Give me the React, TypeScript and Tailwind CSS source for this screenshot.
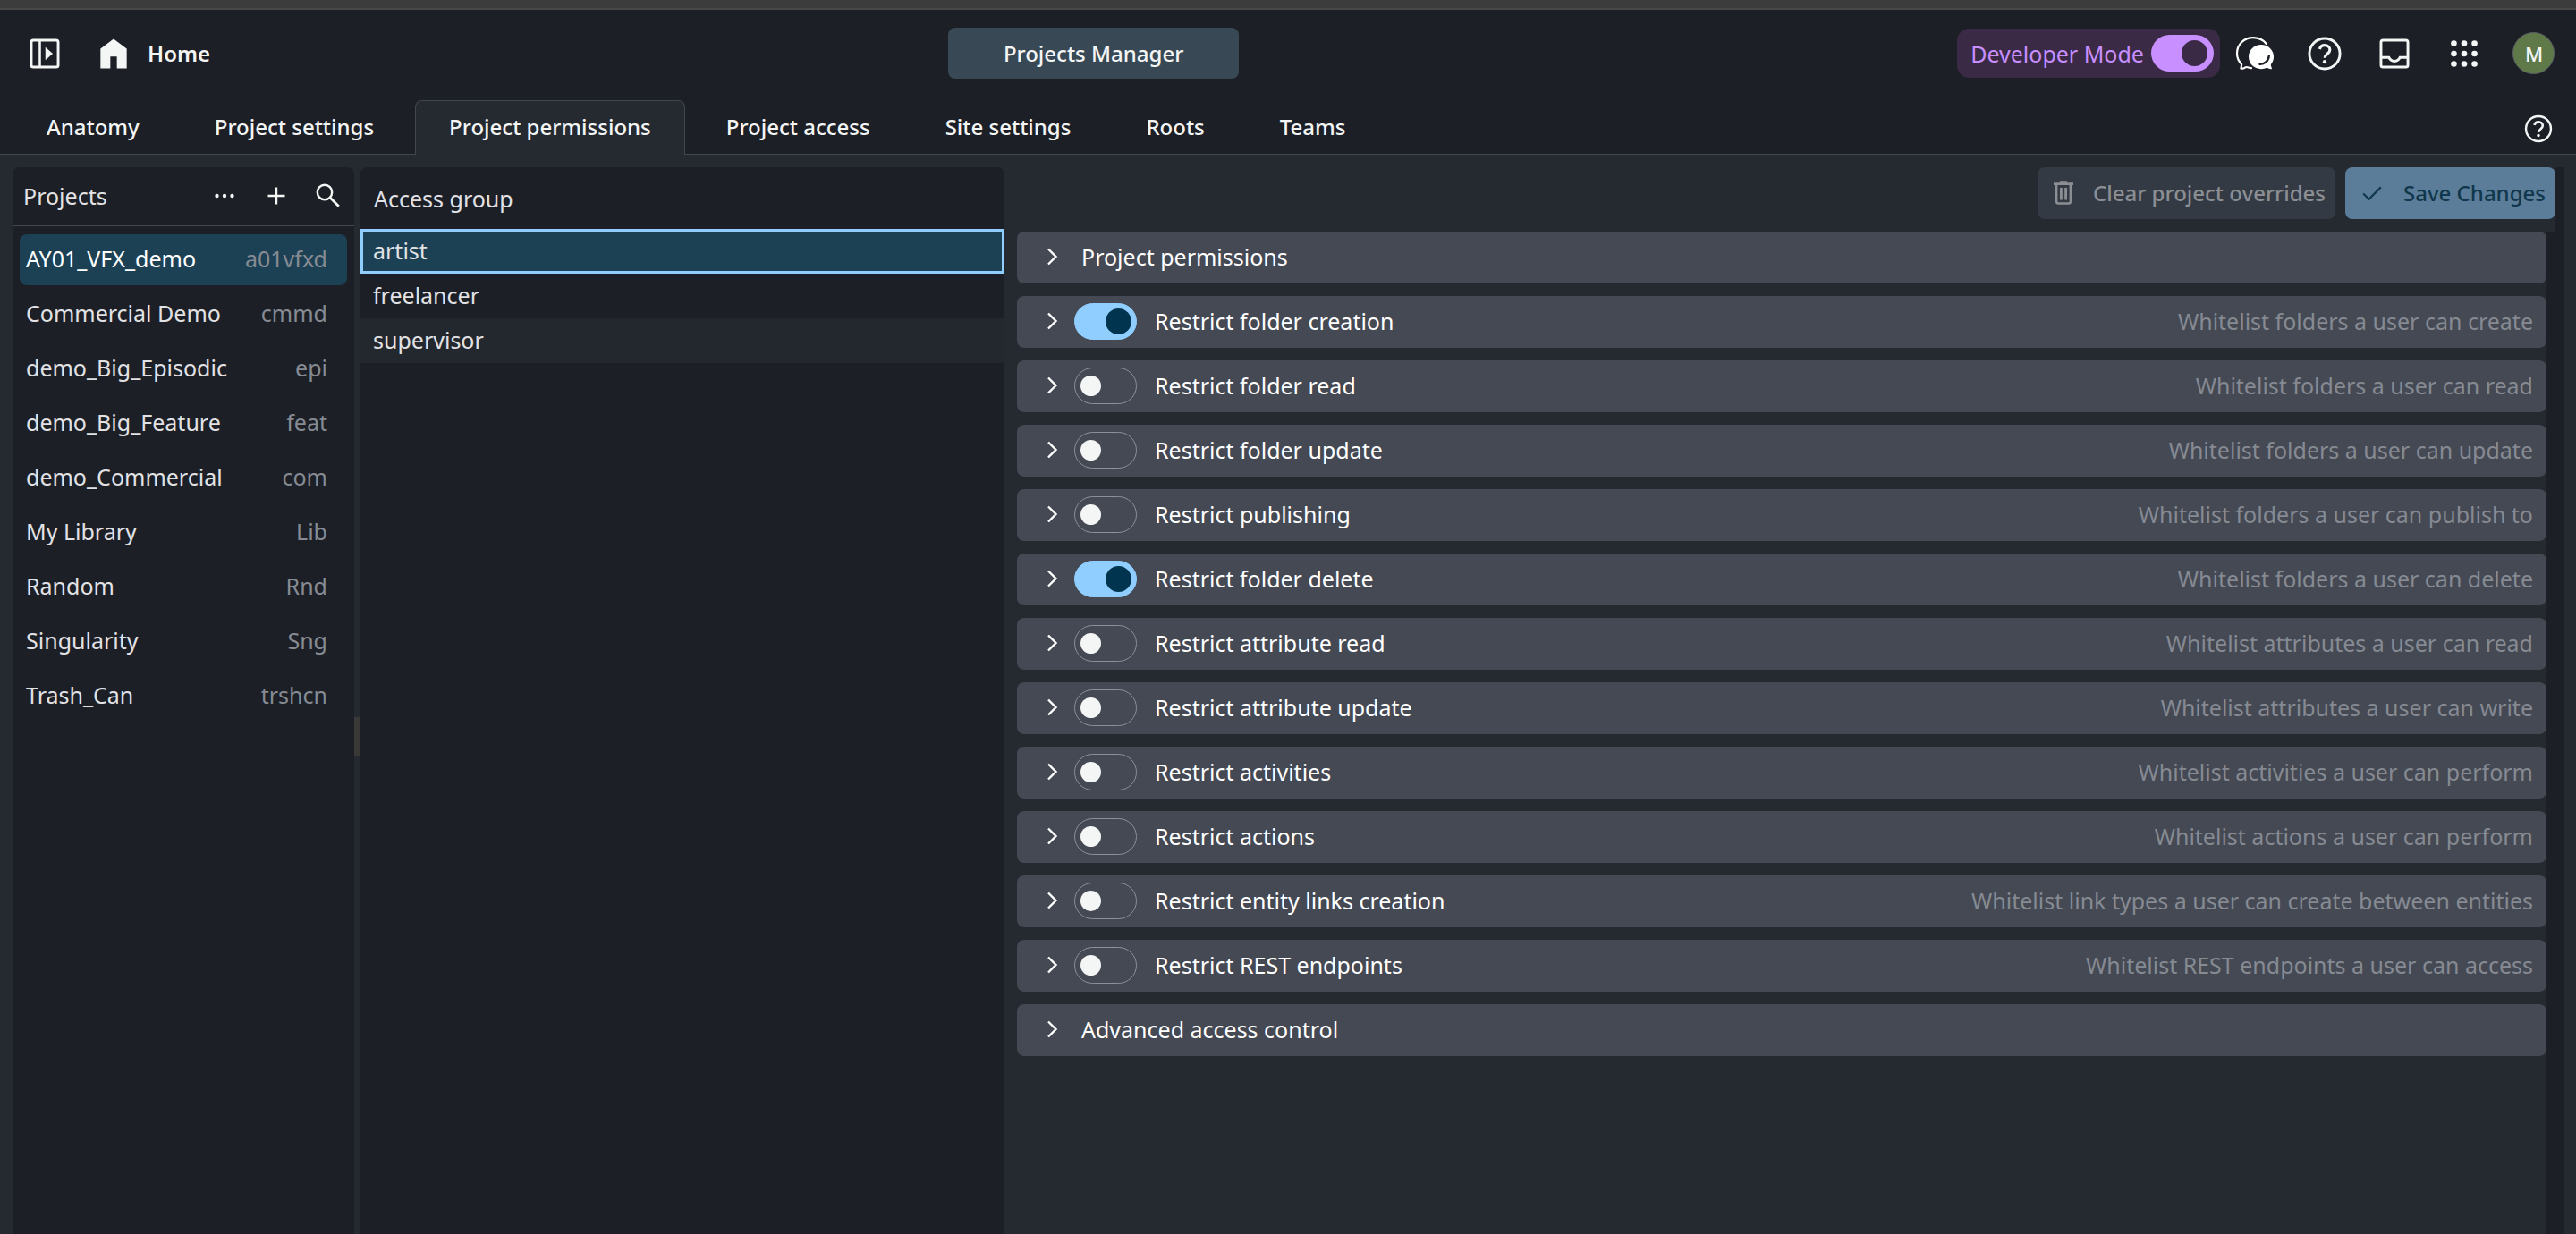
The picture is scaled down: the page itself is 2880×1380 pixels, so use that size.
import React from 'react';

interface Project {
  name: string;
  code: string;
}

interface Permission {
  label: string;
  hint: string;
  enabled: boolean;
}

const TABS = ['Anatomy', 'Project settings', 'Project permissions', 'Project access', 'Site settings', 'Roots', 'Teams'];

const PROJECTS: Project[] = [
  { name: 'AY01_VFX_demo', code: 'a01vfxd' },
  { name: 'Commercial Demo', code: 'cmmd' },
  { name: 'demo_Big_Episodic', code: 'epi' },
  { name: 'demo_Big_Feature', code: 'feat' },
  { name: 'demo_Commercial', code: 'com' },
  { name: 'My Library', code: 'Lib' },
  { name: 'Random', code: 'Rnd' },
  { name: 'Singularity', code: 'Sng' },
  { name: 'Trash_Can', code: 'trshcn' },
];

const GROUPS = ['artist', 'freelancer', 'supervisor'];

const PERMISSIONS: Permission[] = [
  { label: 'Restrict folder creation', hint: 'Whitelist folders a user can create', enabled: true },
  { label: 'Restrict folder read', hint: 'Whitelist folders a user can read', enabled: false },
  { label: 'Restrict folder update', hint: 'Whitelist folders a user can update', enabled: false },
  { label: 'Restrict publishing', hint: 'Whitelist folders a user can publish to', enabled: false },
  { label: 'Restrict folder delete', hint: 'Whitelist folders a user can delete', enabled: true },
  { label: 'Restrict attribute read', hint: 'Whitelist attributes a user can read', enabled: false },
  { label: 'Restrict attribute update', hint: 'Whitelist attributes a user can write', enabled: false },
  { label: 'Restrict activities', hint: 'Whitelist activities a user can perform', enabled: false },
  { label: 'Restrict actions', hint: 'Whitelist actions a user can perform', enabled: false },
  { label: 'Restrict entity links creation', hint: 'Whitelist link types a user can create between entities', enabled: false },
  { label: 'Restrict REST endpoints', hint: 'Whitelist REST endpoints a user can access', enabled: false },
];

const HelpIcon: React.FC<{ className: string }> = ({ className }) => (
  <svg className={className} viewBox="0 0 24 24" fill="none" stroke="currentColor">
    <circle cx="12" cy="12" r="9.3" strokeWidth="1.6" />
    <path d="M8.9 9.3C9.4 7.7 10.5 6.9 12 6.9c1.9 0 3.2 1.2 3.2 2.8 0 2.3-3.1 2.6-3.1 4.9" strokeWidth="1.7" />
    <circle cx="12" cy="17" r="1.15" fill="currentColor" stroke="none" />
  </svg>
);

const ChatIcon = () => (
  <svg className="h-[38px] w-[44px]" viewBox="0 0 44 38" fill="none">
    <path
      d="M35 8.2C31.6 4 26.2 1.2 20 1.2 9.7 1.2 2 9 2 18.8c0 4.7 1.9 8.800 5 11.800.4 1.900-.2 3.400-.6 5 1.800.4 3.400-.2 5-1.300 1.800-1.200 3.600.8 6.600.9"
      stroke="#fff"
      strokeWidth="2.2"
      strokeLinecap="round"
      strokeLinejoin="round"
    />
    <path
      d="M29 9c7.9 0 14 6 14 13.6 0 3.5-1.2 6.4-3.2 8.7.1 1.9.9 3 1.2 4.7-2.1.6-3.6-.2-5.4-1.2-2 .9-4.2 1.4-6.6 1.4-7.9 0-14-6-14-13.600S21.100 9 29 9z"
      fill="#fff"
    />
    <path d="M27.5 30.7c5 .3 9.7-3.3 10.3-9.2" stroke="#1c1f26" strokeWidth="2.4" strokeLinecap="round" />
  </svg>
);

const ChevronIcon = () => (
  <svg className="h-[28px] w-[28px]" viewBox="0 0 28 28" fill="none" stroke="currentColor" strokeWidth="2.4">
    <path d="M10 5.5l8.5 8.5-8.5 8.5" />
  </svg>
);

const Header = () => (
  <header className="flex h-[99px] items-center justify-between pr-[8px] pb-[2px] pl-[28px]">
    <div className="flex items-center pr-[22px]">
      <button aria-label="Toggle sidebar" className="mr-[33px]">
        <svg className="size-[44px]" viewBox="0 0 24 24" fill="none" stroke="currentColor">
          <rect x="3.8" y="3.8" width="16.4" height="16.4" rx="1.3" strokeWidth="1.6" />
          <path d="M9 4v16" strokeWidth="1.4" />
          <path d="M12.4 8v8l4.5-4z" fill="currentColor" stroke="none" />
        </svg>
      </button>
      <a href="#home" className="flex items-center gap-[16px] font-semibold">
        <svg className="size-[44px]" viewBox="0 0 24 24" fill="currentColor">
          <path d="M4 21V9l8-6 8 6v12h-6v-7.2h-4V21z" />
        </svg>
        Home
      </a>
    </div>

    <button className="h-[57px] rounded-lg bg-[#384955] px-[62px] font-medium">Projects Manager</button>

    <div className="flex items-center">
      <label className="flex h-[55px] items-center gap-[8px] rounded-[14px] bg-[#3b2a45] pr-[7px] pl-[15px] text-[25px] text-[#c78fff]">
        Developer Mode
        <input
          type="checkbox"
          defaultChecked
          className="flex h-[41px] w-[70px] appearance-none items-center justify-end rounded-full bg-[#c78fff] pr-[7px] before:size-[29px] before:rounded-full before:bg-[#3b2a45] before:content-['']"
        />
      </label>
      <button aria-label="Chat" className="flex w-[78px] justify-center">
        <ChatIcon />
      </button>
      <button aria-label="Help" className="flex w-[78px] justify-center">
        <HelpIcon className="size-[44px]" />
      </button>
      <button aria-label="Inbox" className="flex w-[78px] justify-center">
        <svg className="size-[44px]" viewBox="0 0 24 24" fill="none" stroke="currentColor" strokeWidth="1.6">
          <rect x="3.8" y="3.8" width="16.4" height="16.4" rx="1.3" />
          <path d="M4 14.3h4.6c.7 1.5 1.9 2.3 3.4 2.3s2.7-.8 3.4-2.3H20" />
        </svg>
      </button>
      <button aria-label="Apps" className="flex w-[78px] justify-center">
        <svg className="size-[44px]" viewBox="0 0 24 24" fill="currentColor">
          {[5.7, 12, 18.3].map((cy) =>
            [5.7, 12, 18.3].map((cx) => <circle key={`${cx}-${cy}`} cx={cx} cy={cy} r="1.8" />)
          )}
        </svg>
      </button>
      <button aria-label="Account" className="flex w-[78px] justify-center">
        <span className="flex size-[47px] items-center justify-center rounded-full border border-[#5a5f66] bg-[#5f7a48] text-[22px] font-medium">
          M
        </span>
      </button>
    </div>
  </header>
);

const TabBar = () => (
  <nav className="flex h-[63px] items-end justify-between border-b border-[#41464f] pr-[24px] pl-[14px] font-medium">
    <div className="-mb-[2px] flex gap-[8px]">
      {TABS.map((tab) => (
        <a
          key={tab}
          href="#tab"
          className={
            tab === 'Project permissions'
              ? 'flex h-[62px] items-center rounded-t-lg border border-b-0 border-[#41464f] bg-[#252930] px-[37px] pb-[4px]'
              : 'flex h-[62px] items-center border border-b-0 border-transparent px-[37px] pb-[4px]'
          }
        >
          {tab}
        </a>
      ))}
    </div>
    <button aria-label="Page help" className="mb-[10px]">
      <HelpIcon className="size-[36px]" />
    </button>
  </nav>
);

const ProjectList = () => (
  <aside className="w-[382px] shrink-0 rounded-t-lg bg-[#1c1f26]">
    <div className="flex h-[66px] items-center border-b border-[#41464f] pb-[2px] pl-[12px]">
      <h2 className="flex-1 text-[#e2e2e5]">Projects</h2>
      <button aria-label="More" className="flex w-[58px] justify-center">
        <svg className="size-[32px]" viewBox="0 0 32 32" fill="currentColor">
          <circle cx="7.5" cy="16" r="2.2" />
          <circle cx="16" cy="16" r="2.2" />
          <circle cx="24.5" cy="16" r="2.2" />
        </svg>
      </button>
      <button aria-label="Add project" className="flex w-[58px] justify-center">
        <svg className="size-[32px]" viewBox="0 0 32 32" stroke="currentColor" strokeWidth="2.4">
          <path d="M16 6.5v19M6.5 16h19" />
        </svg>
      </button>
      <button aria-label="Search projects" className="flex w-[58px] justify-center">
        <svg className="size-[32px]" viewBox="0 0 32 32" fill="none" stroke="currentColor" strokeWidth="2.4">
          <circle cx="12" cy="12" r="8.2" />
          <path d="M17.8 17.8l10 10" strokeWidth="2.7" />
        </svg>
      </button>
    </div>
    <ul className="flex flex-col gap-[4px] px-[8px] py-[9px]">
      {PROJECTS.map((project, index) => (
        <li key={project.code}>
          <button
            className={
              index === 0
                ? 'flex h-[57px] w-full items-center justify-between rounded-lg bg-[#1c4155] pr-[22px] pb-[3px] pl-[7px] text-white'
                : 'flex h-[57px] w-full items-center justify-between rounded-lg pr-[22px] pb-[3px] pl-[7px] text-[#e2e2e5]'
            }
          >
            <span>{project.name}</span>
            <span className="text-[#868b93]">{project.code}</span>
          </button>
        </li>
      ))}
    </ul>
  </aside>
);

const AccessGroups = () => (
  <section className="w-[25vw] shrink-0 rounded-t-lg bg-[#1c1f26]">
    <table className="w-full border-collapse text-left text-[#e2e2e5]">
      <thead>
        <tr className="h-[69px]">
          <th className="px-[15px] font-normal">Access group</th>
        </tr>
      </thead>
      <tbody>
        {GROUPS.map((group, index) => (
          <tr
            key={group}
            className={
              index === 0
                ? 'h-[50px] bg-[#1c4155] outline-3 -outline-offset-3 outline-[#8fceff]'
                : 'h-[50px] even:bg-[#1c1f26] odd:bg-[#23272e]'
            }
          >
            <td className="px-[14px] pb-[2px]">{group}</td>
          </tr>
        ))}
      </tbody>
    </table>
  </section>
);

const SectionRow: React.FC<{ title: string }> = ({ title }) => (
  <div className="flex h-[58px] items-center rounded-lg bg-[#444954] pb-[2px] pl-[25px]">
    <button className="flex items-center gap-[19px]">
      <ChevronIcon />
      {title}
    </button>
  </div>
);

const PermissionRow: React.FC<{ permission: Permission }> = ({ permission }) => (
  <div className="flex h-[58px] items-center rounded-lg bg-[#444954] pr-[15px] pb-[2px] pl-[25px]">
    <button aria-label={`Expand ${permission.label}`} className="mr-[11px]">
      <ChevronIcon />
    </button>
    <label className="flex flex-1 items-center gap-[20px]">
      <input
        type="checkbox"
        defaultChecked={permission.enabled}
        className="flex h-[41px] w-[70px] appearance-none items-center rounded-full border border-[#8b9198] px-[6px] before:size-[23px] before:rounded-full before:bg-[#f4f5f5] before:content-[''] checked:justify-end checked:border-[#8fceff] checked:bg-[#8fceff] checked:px-[5px] checked:before:size-[29px] checked:before:bg-[#00344f]"
      />
      {permission.label}
    </label>
    <span className="text-[#868a92]">{permission.hint}</span>
  </div>
);

const PermissionsPanel = () => (
  <main className="flex flex-1 flex-col bg-[#1c1f26]">
    <div className="mr-[10px] flex justify-end gap-[11px] bg-[#252930] pb-[14px] text-[24px] font-medium">
      <button className="flex h-[58px] items-center gap-[22px] rounded-lg bg-[#343a44] pr-[11px] pl-[18px] text-[#8b8e92]">
        <svg className="h-[28px] w-[22px]" viewBox="0 0 22 28" fill="none" stroke="currentColor">
          <path d="M0 3.6h22M7 1.5h8" strokeWidth="2.6" />
          <path d="M3.2 4v19.5c0 1.2.8 2 2 2h11.6c1.2 0 2-.8 2-2V4" strokeWidth="2.4" />
          <path d="M8.4 8v13.5M13.6 8v13.5" strokeWidth="2.8" />
        </svg>
        Clear project overrides
      </button>
      <button className="flex h-[58px] items-center gap-[24px] rounded-lg bg-[#5b7d99] pr-[11px] pl-[19px] text-[#10374b]">
        <svg className="h-[20px] w-[22px]" viewBox="0 0 22 20" fill="none" stroke="currentColor" strokeWidth="2.2">
          <path d="M1.2 10.5l6.3 6.2L20.8 3.4" />
        </svg>
        Save Changes
      </button>
    </div>
    <div className="mr-[20px] flex flex-1 flex-col gap-[14px] bg-[#252930] pl-[14px] text-white">
      <SectionRow title="Project permissions" />
      {PERMISSIONS.map((permission) => (
        <PermissionRow key={permission.label} permission={permission} />
      ))}
      <SectionRow title="Advanced access control" />
    </div>
  </main>
);

const App = () => {
  return (
    <div className="flex min-h-screen flex-col bg-[#1c1f26] font-['Noto_Sans',sans-serif] text-[24px] leading-[32px] text-[#f4f5f5]">
      <div className="h-[11px] border-b-2 border-[#484848] bg-[#3c3c3c]" />
      <Header />
      <TabBar />
      <div className="flex flex-1 bg-[#252930] pt-[14px] pr-[13px] pl-[14px] text-[25px]">
        <ProjectList />
        <div className="w-[7px] shrink-0 pt-[615px]">
          <div className="h-[43px] bg-[#3a3937]" />
        </div>
        <AccessGroups />
        <PermissionsPanel />
      </div>
    </div>
  );
};

export default App;
